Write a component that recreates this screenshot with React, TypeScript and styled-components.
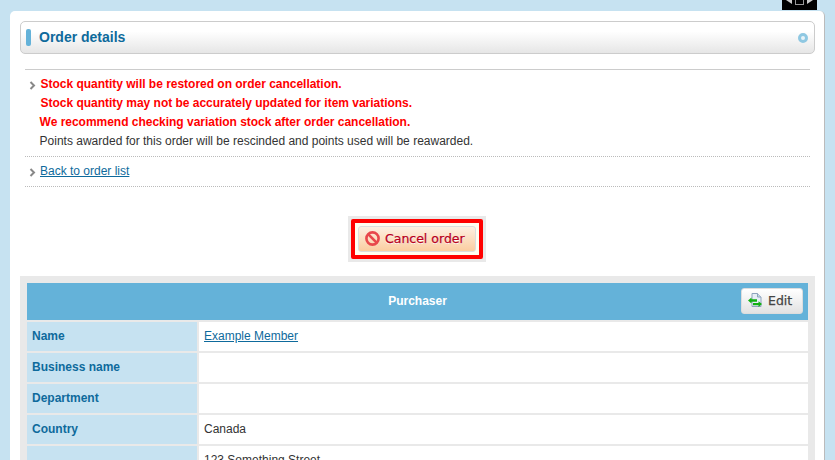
import React from 'react';
import styled, { createGlobalStyle } from 'styled-components';

const GlobalStyle = createGlobalStyle`
    html, body {
        margin: 0;
        height: 460px;
        overflow: hidden;
        background: #c6e2f1;
        font-family: "Liberation Sans", Arial, sans-serif;
        font-size: 12px;
        color: #333;
    }
`;

const Page = styled.div`
    position: relative;
    height: 460px;
    padding: 11px 10px 0 10px;
    box-sizing: border-box;
    overflow: hidden;
`;

const ResizeWidget = styled.svg`
    position: absolute;
    top: 0;
    left: 782px;
    display: block;
`;

const Panel = styled.main`
    background: #fff;
    border-right: 1px solid #bbb;
    border-radius: 5px 5px 0 0;
    padding: 10px 9px 0 10px;
    height: 600px;
    box-sizing: border-box;
`;

const TitleBar = styled.header`
    height: 33px;
    box-sizing: border-box;
    border: 1px solid #ccc;
    border-radius: 5px;
    background: linear-gradient(#fff 30%, #e6e6e6);
    display: flex;
    align-items: center;
    padding: 0 6px 0 5px;
`;

const TitleMark = styled.span`
    width: 5px;
    height: 17px;
    border-radius: 2px;
    background: #64b2d9;
    margin-right: 8px;
`;

const Title = styled.h1`
    flex: 1;
    margin: 0 0 1px;
    font-size: 14px;
    font-weight: bold;
    color: #0e6a9c;
`;

const TitleDot = styled.span`
    width: 10px;
    height: 10px;
    box-sizing: border-box;
    border: 3px solid #8fc8e2;
    border-radius: 50%;
    background: #e8f3f8;
`;

const Notice = styled.section`
    margin: 15px 5px 0;
    border-top: 1px solid #ccc;
    border-bottom: 1px dotted #bbb;
    padding: 5px 0;
`;

const NoticeLine = styled.div<{ $indent: number; $alert?: boolean }>`
    position: relative;
    height: 19px;
    line-height: 19px;
    padding-left: ${props => props.$indent}px;
    color: ${props => (props.$alert ? '#f00' : '#333')};
    font-weight: ${props => (props.$alert ? 'bold' : 'normal')};
    letter-spacing: ${props => (props.$alert ? '-0.02px' : '0')};
`;

const Chevron = styled.svg<{ $top: number }>`
    position: absolute;
    left: 4px;
    top: ${props => props.$top}px;
`;

const BackRow = styled.nav`
    position: relative;
    margin: 0 5px;
    height: 29px;
    line-height: 29px;
    padding-left: 15px;
    border-bottom: 1px dotted #bbb;
`;

const BackLink = styled.a`
    color: #0e6a9c;
    text-decoration: underline;
`;

const ButtonRow = styled.div`
    display: flex;
    justify-content: center;
    margin-top: 29px;
    padding-right: 1px;
`;

const ButtonHalo = styled.div`
    padding: 3px;
    background: #e9e9e9;
`;

const ButtonFrame = styled.div`
    border: 4px solid #f00;
    border-radius: 2px;
    padding: 3px;
    background: #fffdf0;
`;

const CancelButton = styled.button`
    display: flex;
    align-items: center;
    gap: 5px;
    width: 118px;
    height: 26px;
    box-sizing: border-box;
    padding: 0 0 1px 6px;
    border: 1px solid #ddd;
    border-radius: 3px;
    background: linear-gradient(#fdf0e2, #fbcda0);
    color: #b8001c;
    font-family: "DejaVu Sans", sans-serif;
    font-size: 12.5px;
    -webkit-text-stroke: 0.25px #b8001c;
    text-shadow: 0 1px 0 #fff;
`;

const Section = styled.section`
    margin-top: 14px;
    background: #e9e9e9;
    padding: 7px;
`;

const SectionHead = styled.div`
    position: relative;
    height: 37px;
    background: #64b2d9;
    color: #fff;
    font-weight: bold;
    display: flex;
    align-items: center;
    justify-content: center;
    padding-bottom: 2px;
    box-sizing: border-box;
`;

const EditButton = styled.button`
    position: absolute;
    right: 5px;
    top: 5px;
    width: 62px;
    height: 26px;
    box-sizing: border-box;
    display: flex;
    align-items: center;
    gap: 5px;
    padding: 0 0 1px 6px;
    border: 1px solid #ddd;
    border-radius: 3px;
    background: linear-gradient(#fff, #e2e2e2);
    color: #444;
    font-family: "DejaVu Sans", sans-serif;
    font-size: 12.5px;
    font-weight: normal;
    -webkit-text-stroke: 0.25px #444;
`;

const InfoRow = styled.div<{ $tall?: boolean }>`
    display: grid;
    grid-template-columns: 170px 1fr;
    gap: 2px;
    margin-top: 2px;
    min-height: ${props => (props.$tall ? 60 : 29)}px;
`;

const RowLabel = styled.div`
    background: #c6e2f1;
    color: #0e6a9c;
    font-weight: bold;
    padding: 0 5px;
    line-height: 29px;
`;

const RowValue = styled.div<{ $tall?: boolean }>`
    background: #fff;
    padding: 0 5px;
    line-height: ${props => (props.$tall ? 19 : 29)}px;
    padding-top: ${props => (props.$tall ? 5 : 0)}px;
`;

const ValueLink = styled.a`
    color: #0e6a9c;
    text-decoration: underline;
`;

const ChevronIcon = ({ top }: { top: number }) => (
    <Chevron $top={top} width="7" height="9" viewBox="0 0 7 9">
        <path d="M1.5 1 L5 4.5 L1.5 8" fill="none" stroke="#888" strokeWidth="2" />
    </Chevron>
);

const BanIcon = () => (
    <svg width="15" height="15" viewBox="0 0 15 15">
        <circle cx="7.5" cy="7.5" r="6.1" fill="none" stroke="#e8484c" strokeWidth="2.6" />
        <path d="M3.4 3.4 L11.6 11.6" stroke="#e8484c" strokeWidth="2.6" />
    </svg>
);

const EditIcon = () => (
    <svg width="15" height="15" viewBox="0 0 15 15">
        <path d="M4 0.5 H9.5 L13 4 V13.5 H4 Z" fill="#e6eef6" stroke="#8ea4bd" />
        <path d="M9.5 0.5 V4 H13" fill="#c8d8e8" stroke="#8ea4bd" />
        <path d="M0 7.5 L3.5 4.5 V6.3 H9 V8.7 H3.5 V10.5 Z" fill="#12b012" />
        <path d="M14 11 L10.5 8.2 V10 H5 V12.2 H10.5 V14 Z" fill="#12b012" />
    </svg>
);

const rows = [
    { label: 'Name', link: 'Example Member' },
    { label: 'Business name' },
    { label: 'Department' },
    { label: 'Country', value: 'Canada' },
];

const App = () => (
    <Page>
        <GlobalStyle />
        <Panel>
            <TitleBar>
                <TitleMark />
                <Title>Order details</Title>
                <TitleDot />
            </TitleBar>
            <Notice>
                <NoticeLine $indent={15.6} $alert>
                    <ChevronIcon top={6} />
                    Stock quantity will be restored on order cancellation.
                </NoticeLine>
                <NoticeLine $indent={15.6} $alert>Stock quantity may not be accurately updated for item variations.</NoticeLine>
                <NoticeLine $indent={14.6} $alert>We recommend checking variation stock after order cancellation.</NoticeLine>
                <NoticeLine $indent={14.6}>Points awarded for this order will be rescinded and points used will be reawarded.</NoticeLine>
            </Notice>
            <BackRow>
                <ChevronIcon top={11} />
                <BackLink href="#">Back to order list</BackLink>
            </BackRow>
            <ButtonRow>
                <ButtonHalo>
                    <ButtonFrame>
                        <CancelButton>
                            <BanIcon />
                            Cancel order
                        </CancelButton>
                    </ButtonFrame>
                </ButtonHalo>
            </ButtonRow>
            <Section>
                <SectionHead>
                    Purchaser
                    <EditButton>
                        <EditIcon />
                        Edit
                    </EditButton>
                </SectionHead>
                {rows.map(row => (
                    <InfoRow key={row.label}>
                        <RowLabel>{row.label}</RowLabel>
                        <RowValue>{row.link ? <ValueLink href="#">{row.link}</ValueLink> : row.value}</RowValue>
                    </InfoRow>
                ))}
                <InfoRow $tall>
                    <RowLabel />
                    <RowValue $tall>123 Something Street</RowValue>
                </InfoRow>
            </Section>
        </Panel>
        <ResizeWidget width="35" height="10" viewBox="0 0 35 10">
            <rect width="35" height="10" fill="#000" />
            <path d="M4 0 H10 V4 Z" fill="#ccc" />
            <rect x="13.5" y="-1" width="8" height="5.5" fill="none" stroke="#999" />
            <path d="M25 0 H31 L25 4 Z" fill="#ccc" />
        </ResizeWidget>
    </Page>
);

export default App;
